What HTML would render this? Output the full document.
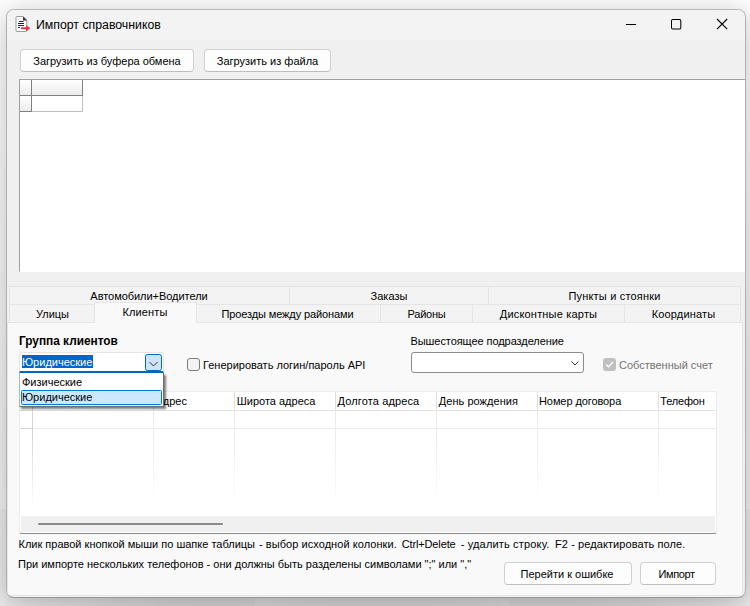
<!DOCTYPE html>
<html lang="ru">
<head>
<meta charset="utf-8">
<title>Импорт справочников</title>
<style>
*{box-sizing:border-box;margin:0;padding:0}
html,body{width:750px;height:606px;overflow:hidden}
body{position:relative;background:#fff;font-family:"Liberation Sans",sans-serif;font-size:11px;color:#000;}
.abs{position:absolute}
#win{position:absolute;left:6px;top:9px;width:740px;height:589px;border:1px solid #b0b0b0;border-top-color:#b8b8b8;border-bottom-color:#989898;border-radius:8px;background:#f0f0f0;overflow:hidden;box-shadow:0 214.900px 255.430px -36.980px rgba(0,0,0,.2459),0 4.930px 28.640px .58px rgba(0,0,0,.2389);}
/* coordinates inside #win are page coords minus (7,10) -> use inner wrapper shifted */
#in{position:absolute;left:-7px;top:-10px;width:750px;height:606px}
#tbar{left:7px;top:10px;width:738px;height:30px;background:#f3f3f3}
#title{left:36px;top:18px;font-size:12.3px;line-height:15px;white-space:nowrap}
.btn{position:absolute;height:23px;border:1px solid #d0d0d0;border-bottom-color:#bdbdbd;border-radius:4px;background:#fdfdfd;text-align:center;line-height:21px;padding-top:1px;white-space:nowrap}
.grid1{left:19px;top:79px;width:727px;height:193px;background:#fff;border-left:1px solid #a0a0a0;border-top:1px solid #a0a0a0;border-bottom:1px solid #fff}
.tab{position:absolute;height:19px;background:#f3f3f3;border:1px solid #e5e5e5;text-align:center;line-height:18px;white-space:nowrap}
#page{left:7px;top:322px;width:736px;height:274px;background:#f9f9f9;border:1px solid #e5e5e5}
.vl{top:392px;width:1px;height:120px;background:linear-gradient(#e0e0e0 0,#e0e0e0 18px,#ebebeb 19px,#ebebeb 40px,#fff 115px)}
.sg{position:absolute;top:0;white-space:pre}
.lbl{position:absolute;white-space:nowrap;line-height:13px}
</style>
</head>
<body>
<div id="win"><div id="in">
 <div id="tbar" class="abs"></div>
 <svg class="abs" style="left:15px;top:16px" width="16" height="16" viewBox="0 0 16 16">
  <path d="M2 .5h6.300l3.500 3.500v10.500q0 1-1 1h-8.800q-1 0-1-1v-13q0-1 1-1z" fill="#fff" stroke="#9a9a9a" stroke-width="1"/>
  <path d="M8 .5l4 4h-4z" fill="#333"/>
  <path d="M4 5.500h4.500M3 7.500h6M3 9.500h6M3 11.500h2" stroke="#222" stroke-width="1"/>
  <path d="M6 11.300h5v-2.300l4.300 3.300l-4.300 3.300v-2.300h-5z" fill="#e5393f"/>
 </svg>
 <div id="title" class="abs">Импорт справочников</div>
 <svg class="abs" style="left:625px;top:16px" width="110" height="16" viewBox="0 0 110 16">
  <path d="M1 8.5h10" stroke="#000" stroke-width="1" fill="none"/>
  <rect x="46.500" y="3.500" width="9.300" height="9.500" rx="1.200" fill="none" stroke="#000" stroke-width="1.050"/>
  <path d="M92 3l10.200 10.200M102.200 3l-10.200 10.200" stroke="#000" stroke-width="1.100" fill="none"/>
 </svg>

 <div class="btn" style="left:20px;top:49px;width:174px">Загрузить из буфера обмена</div>
 <div class="btn" style="left:204px;top:49px;width:127px">Загрузить из файла</div>

 <div class="abs grid1">
  <div class="abs" style="left:0;top:0;width:12px;height:16px;background:linear-gradient(#fff,#ececec);border-right:1px solid #808080;border-bottom:1px solid #808080"></div>
  <div class="abs" style="left:12px;top:0;width:51px;height:16px;background:linear-gradient(#fff,#ececec);border-right:1px solid #808080;border-bottom:1px solid #808080"></div>
  <div class="abs" style="left:0;top:16px;width:12px;height:16px;background:linear-gradient(#fff,#ececec);border-right:1px solid #808080;border-bottom:1px solid #808080"></div>
  <div class="abs" style="left:12px;top:16px;width:51px;height:16px;border-right:1px solid #c0c0c0;border-bottom:1px solid #c0c0c0"></div>
 </div>

 <!-- tabs row 1 -->
 <div class="tab" style="left:9px;top:286px;width:281px;letter-spacing:-.04px;padding-right:1px">Автомобили+Водители</div>
 <div class="tab" style="left:289px;top:286px;width:200px">Заказы</div>
 <div class="tab" style="left:488px;top:286px;width:253px;letter-spacing:.18px">Пункты и стоянки</div>
 <!-- tabs row 2 -->
 <div class="tab" style="left:9px;top:304px;width:87px">Улицы</div>
 <div class="tab" style="left:196px;top:304px;width:185px;letter-spacing:-.115px;padding-right:2px">Проезды между районами</div>
 <div class="tab" style="left:380px;top:304px;width:93px;letter-spacing:-.25px">Районы</div>
 <div class="tab" style="left:472px;top:304px;width:153px;letter-spacing:.19px">Дисконтные карты</div>
 <div class="tab" style="left:624px;top:304px;width:117px;letter-spacing:.17px;padding-left:2px">Координаты</div>
 <div id="page" class="abs"></div>
 <div class="tab" style="left:94px;top:302px;width:103px;height:21px;background:#f9f9f9;border-bottom:none;line-height:19px;letter-spacing:.15px;padding-right:1px">Клиенты</div>

 <div class="lbl" id="gk" style="left:19px;top:335px;font-weight:bold;font-size:11.85px">Группа клиентов</div>
 <!-- combo 1 -->
 <div class="abs" style="left:19px;top:352px;width:145px;height:21px;background:#fff;border:1px solid #e5e5e5;border-bottom:2px solid #0067c0;border-radius:3px 3px 0 0"></div>
 <div class="abs" style="left:22px;top:355px;width:71px;height:13px;background:#0066cc;color:#fff;line-height:15px;white-space:nowrap">Юридические</div>
 <div class="abs" style="left:145px;top:354px;width:17px;height:17px;background:#cce4f7;border:1px solid #0067c0;border-radius:2.500px"></div>
 <svg class="abs" style="left:145px;top:354px" width="17" height="17" viewBox="0 0 17 17"><path d="M4.500 8l4 4l4-4" fill="none" stroke="#333" stroke-width="1"/></svg>

 <!-- checkbox 1 -->
 <div class="abs" style="left:187px;top:358px;width:13px;height:13px;border:1px solid #7c7c7c;border-radius:3px;background:#f3f3f3"></div>
 <div class="lbl" style="left:203px;top:359px">Генерировать логин/пароль API</div>

 <div class="lbl" style="left:410.500px;top:335px;letter-spacing:-0.07px">Вышестоящее подразделение</div>
 <div class="abs" style="left:411px;top:352px;width:173px;height:21px;background:#fff;border:1px solid #8c8c8c;border-radius:3px"></div>
 <svg class="abs" style="left:566px;top:354px" width="17" height="17" viewBox="0 0 17 17"><path d="M5.500 7.500l3.500 3.500l3.500-3.500" fill="none" stroke="#333" stroke-width="1"/></svg>

 <div class="abs" style="left:603px;top:358px;width:13px;height:13px;border-radius:3px;background:#c0c0c0"></div>
 <svg class="abs" style="left:603px;top:358px" width="13" height="13" viewBox="0 0 13 13"><path d="M3 6.5l2.5 2.5l4.5-5" fill="none" stroke="#fff" stroke-width="1.2"/></svg>
 <div class="lbl" style="left:619px;top:359px;color:#737373">Собственный счет</div>

 <!-- grid 2 -->
 <div class="abs" id="g2" style="left:19px;top:391px;width:698px;height:143px;background:#fff;border:1px solid #ececec;border-bottom-color:#868686;border-radius:3px"></div>
 <div class="abs" style="left:20px;top:410px;width:696px;height:1px;background:#e2e2e2"></div>
 <div class="abs" style="left:20px;top:428px;width:696px;height:1px;background:#ededed"></div>
 <div class="abs" style="left:20px;top:410px;width:12px;height:1px;background:#d8d8d8"></div>
 <div class="abs" style="left:20px;top:428px;width:12px;height:1px;background:#d8d8d8"></div>
 <div class="abs vl" style="left:32px;background:linear-gradient(#d4d4d4 0,#d4d4d4 36px,#fff 118px)"></div>
 <div class="abs vl" style="left:153px"></div>
 <div class="abs vl" style="left:234px"></div>
 <div class="abs vl" style="left:335px"></div>
 <div class="abs vl" style="left:436px"></div>
 <div class="abs vl" style="left:537px"></div>
 <div class="abs vl" style="left:658px"></div>
 <div class="lbl" style="left:155.500px;top:395px">Адрес</div>
 <div class="lbl" style="left:236.700px;top:395px">Широта адреса</div>
 <div class="lbl" style="left:337.500px;top:395px;letter-spacing:.13px">Долгота адреса</div>
 <div class="lbl" style="left:438.800px;top:395px;letter-spacing:.04px">День рождения</div>
 <div class="lbl" style="left:539px;top:395px;letter-spacing:-.09px">Номер договора</div>
 <div class="lbl" style="left:660.300px;top:395px;letter-spacing:-.2px">Телефон</div>
 <div class="abs" style="left:21px;top:516px;width:694px;height:16px;background:#f0f0f0"></div>
 <div class="abs" style="left:38px;top:523px;width:185px;height:2px;background:#8a8a8a;border-radius:1px"></div>

 <!-- dropdown list -->
 <div class="abs" style="left:19px;top:373px;width:145px;height:34px;background:#fff;border:1px solid #6e6e6e;border-top:none;border-left-color:#b4b4b4;box-shadow:2px 2px 2px rgba(0,0,0,.5)"></div>
 <div class="lbl" style="left:22px;top:376px">Физические</div>
 <div class="abs" style="left:21px;top:390px;width:141px;height:15px;background:#cce8ff;border:1px solid #0078d7;border-radius:1.500px"></div>
 <div class="lbl" style="left:22px;top:391px">Юридические</div>

 <div class="lbl" style="left:0;top:538px"><span class="sg" style="left:18.500px">Клик правой кнопкой мыши по шапке таблицы </span><span class="sg" style="left:259px;letter-spacing:.057px">- выбор исходной колонки. </span><span class="sg" style="left:401.700px;letter-spacing:-.133px">Ctrl+Delete </span><span class="sg" style="left:460.700px;letter-spacing:.165px">- удалить строку. </span><span class="sg" style="left:555px;letter-spacing:.085px">F2 - редактировать поле.</span></div>
 <div class="lbl" style="left:18px;top:558px">При импорте нескольких телефонов - они должны быть разделены символами ";" или ","</div>
 <div class="btn" style="left:504px;top:562px;width:128px;padding-right:2px">Перейти к ошибке</div>
 <div class="btn" style="left:640px;top:562px;width:76px;letter-spacing:-0.4px;padding-right:3px">Импорт</div>
</div></div>
</body>
</html>
